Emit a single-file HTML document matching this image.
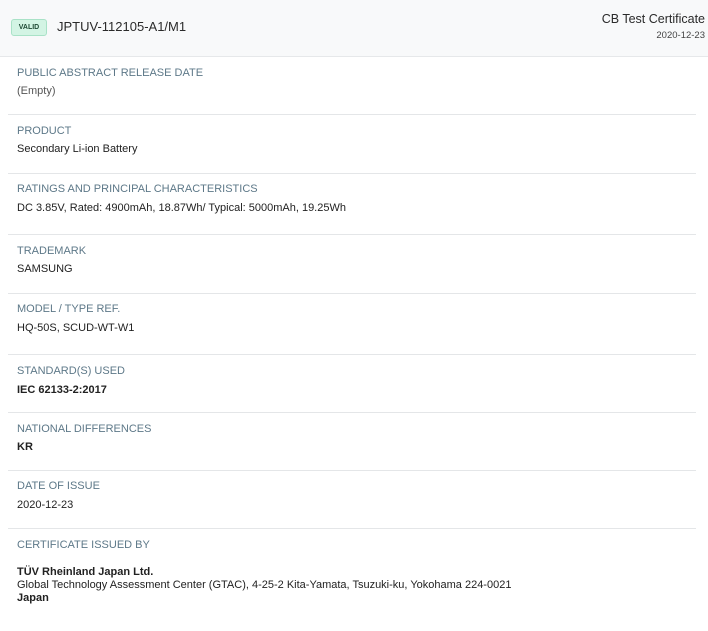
<!DOCTYPE html>
<html><head><style>
body{margin:0;width:708px;height:631px;background:#fff;font-family:"Liberation Sans",Arial,sans-serif;position:relative;overflow:hidden}
.hdr{position:absolute;left:0;top:0;width:708px;height:56px;background:#f8f9fa;border-bottom:1px solid #e6e8ea}
.badge{position:absolute;left:11px;top:19px;width:34px;height:15px;background:#d3f4e4;border:1px solid #a9e2c7;border-radius:3px;font-size:7px;font-weight:bold;color:#1f4a35;text-align:center;line-height:15px}
.t{position:absolute;white-space:nowrap}
.l{position:absolute;left:17px;font-size:11px;color:#5d7888;letter-spacing:0;white-space:nowrap}
.v{position:absolute;left:17px;font-size:11px;color:#222;white-space:nowrap}
.d{position:absolute;left:8px;width:688px;height:1px;background:#e4e6e8}
</style></head><body>
<div class="hdr">
<div class="badge">VALID</div>
<div class="t" style="left:57px;top:19px;font-size:13px;color:#2a2a2a">JPTUV-112105-A1/M1</div>
<div class="t" style="right:3px;top:12px;font-size:12.5px;color:#2a2a2a">CB Test Certificate</div>
<div class="t" style="right:3px;top:30px;font-size:9.5px;color:#444">2020-12-23</div>
</div>
<div class="l" style="top:67px">PUBLIC ABSTRACT RELEASE DATE</div>
<div class="v" style="top:85px;color:#555">(Empty)</div>
<div class="d" style="top:114px"></div>
<div class="l" style="top:125px">PRODUCT</div>
<div class="v" style="top:143px">Secondary Li-ion Battery</div>
<div class="d" style="top:173px"></div>
<div class="l" style="top:183px">RATINGS AND PRINCIPAL CHARACTERISTICS</div>
<div class="v" style="top:202px">DC 3.85V, Rated: 4900mAh, 18.87Wh/ Typical: 5000mAh, 19.25Wh</div>
<div class="d" style="top:234px"></div>
<div class="l" style="top:245px">TRADEMARK</div>
<div class="v" style="top:263px">SAMSUNG</div>
<div class="d" style="top:293px"></div>
<div class="l" style="top:303px">MODEL / TYPE REF.</div>
<div class="v" style="top:322px">HQ-50S, SCUD-WT-W1</div>
<div class="d" style="top:354px"></div>
<div class="l" style="top:365px">STANDARD(S) USED</div>
<div class="v" style="top:384px;font-weight:bold">IEC 62133-2:2017</div>
<div class="d" style="top:412px"></div>
<div class="l" style="top:423px">NATIONAL DIFFERENCES</div>
<div class="v" style="top:441px;font-weight:bold">KR</div>
<div class="d" style="top:470px"></div>
<div class="l" style="top:480px">DATE OF ISSUE</div>
<div class="v" style="top:499px">2020-12-23</div>
<div class="d" style="top:528px"></div>
<div class="l" style="top:539px">CERTIFICATE ISSUED BY</div>
<div class="v" style="top:566px;font-weight:bold">TÜV Rheinland Japan Ltd.</div>
<div class="v" style="top:579px">Global Technology Assessment Center (GTAC), 4-25-2 Kita-Yamata, Tsuzuki-ku, Yokohama 224-0021</div>
<div class="v" style="top:592px;font-weight:bold">Japan</div>
</body></html>
